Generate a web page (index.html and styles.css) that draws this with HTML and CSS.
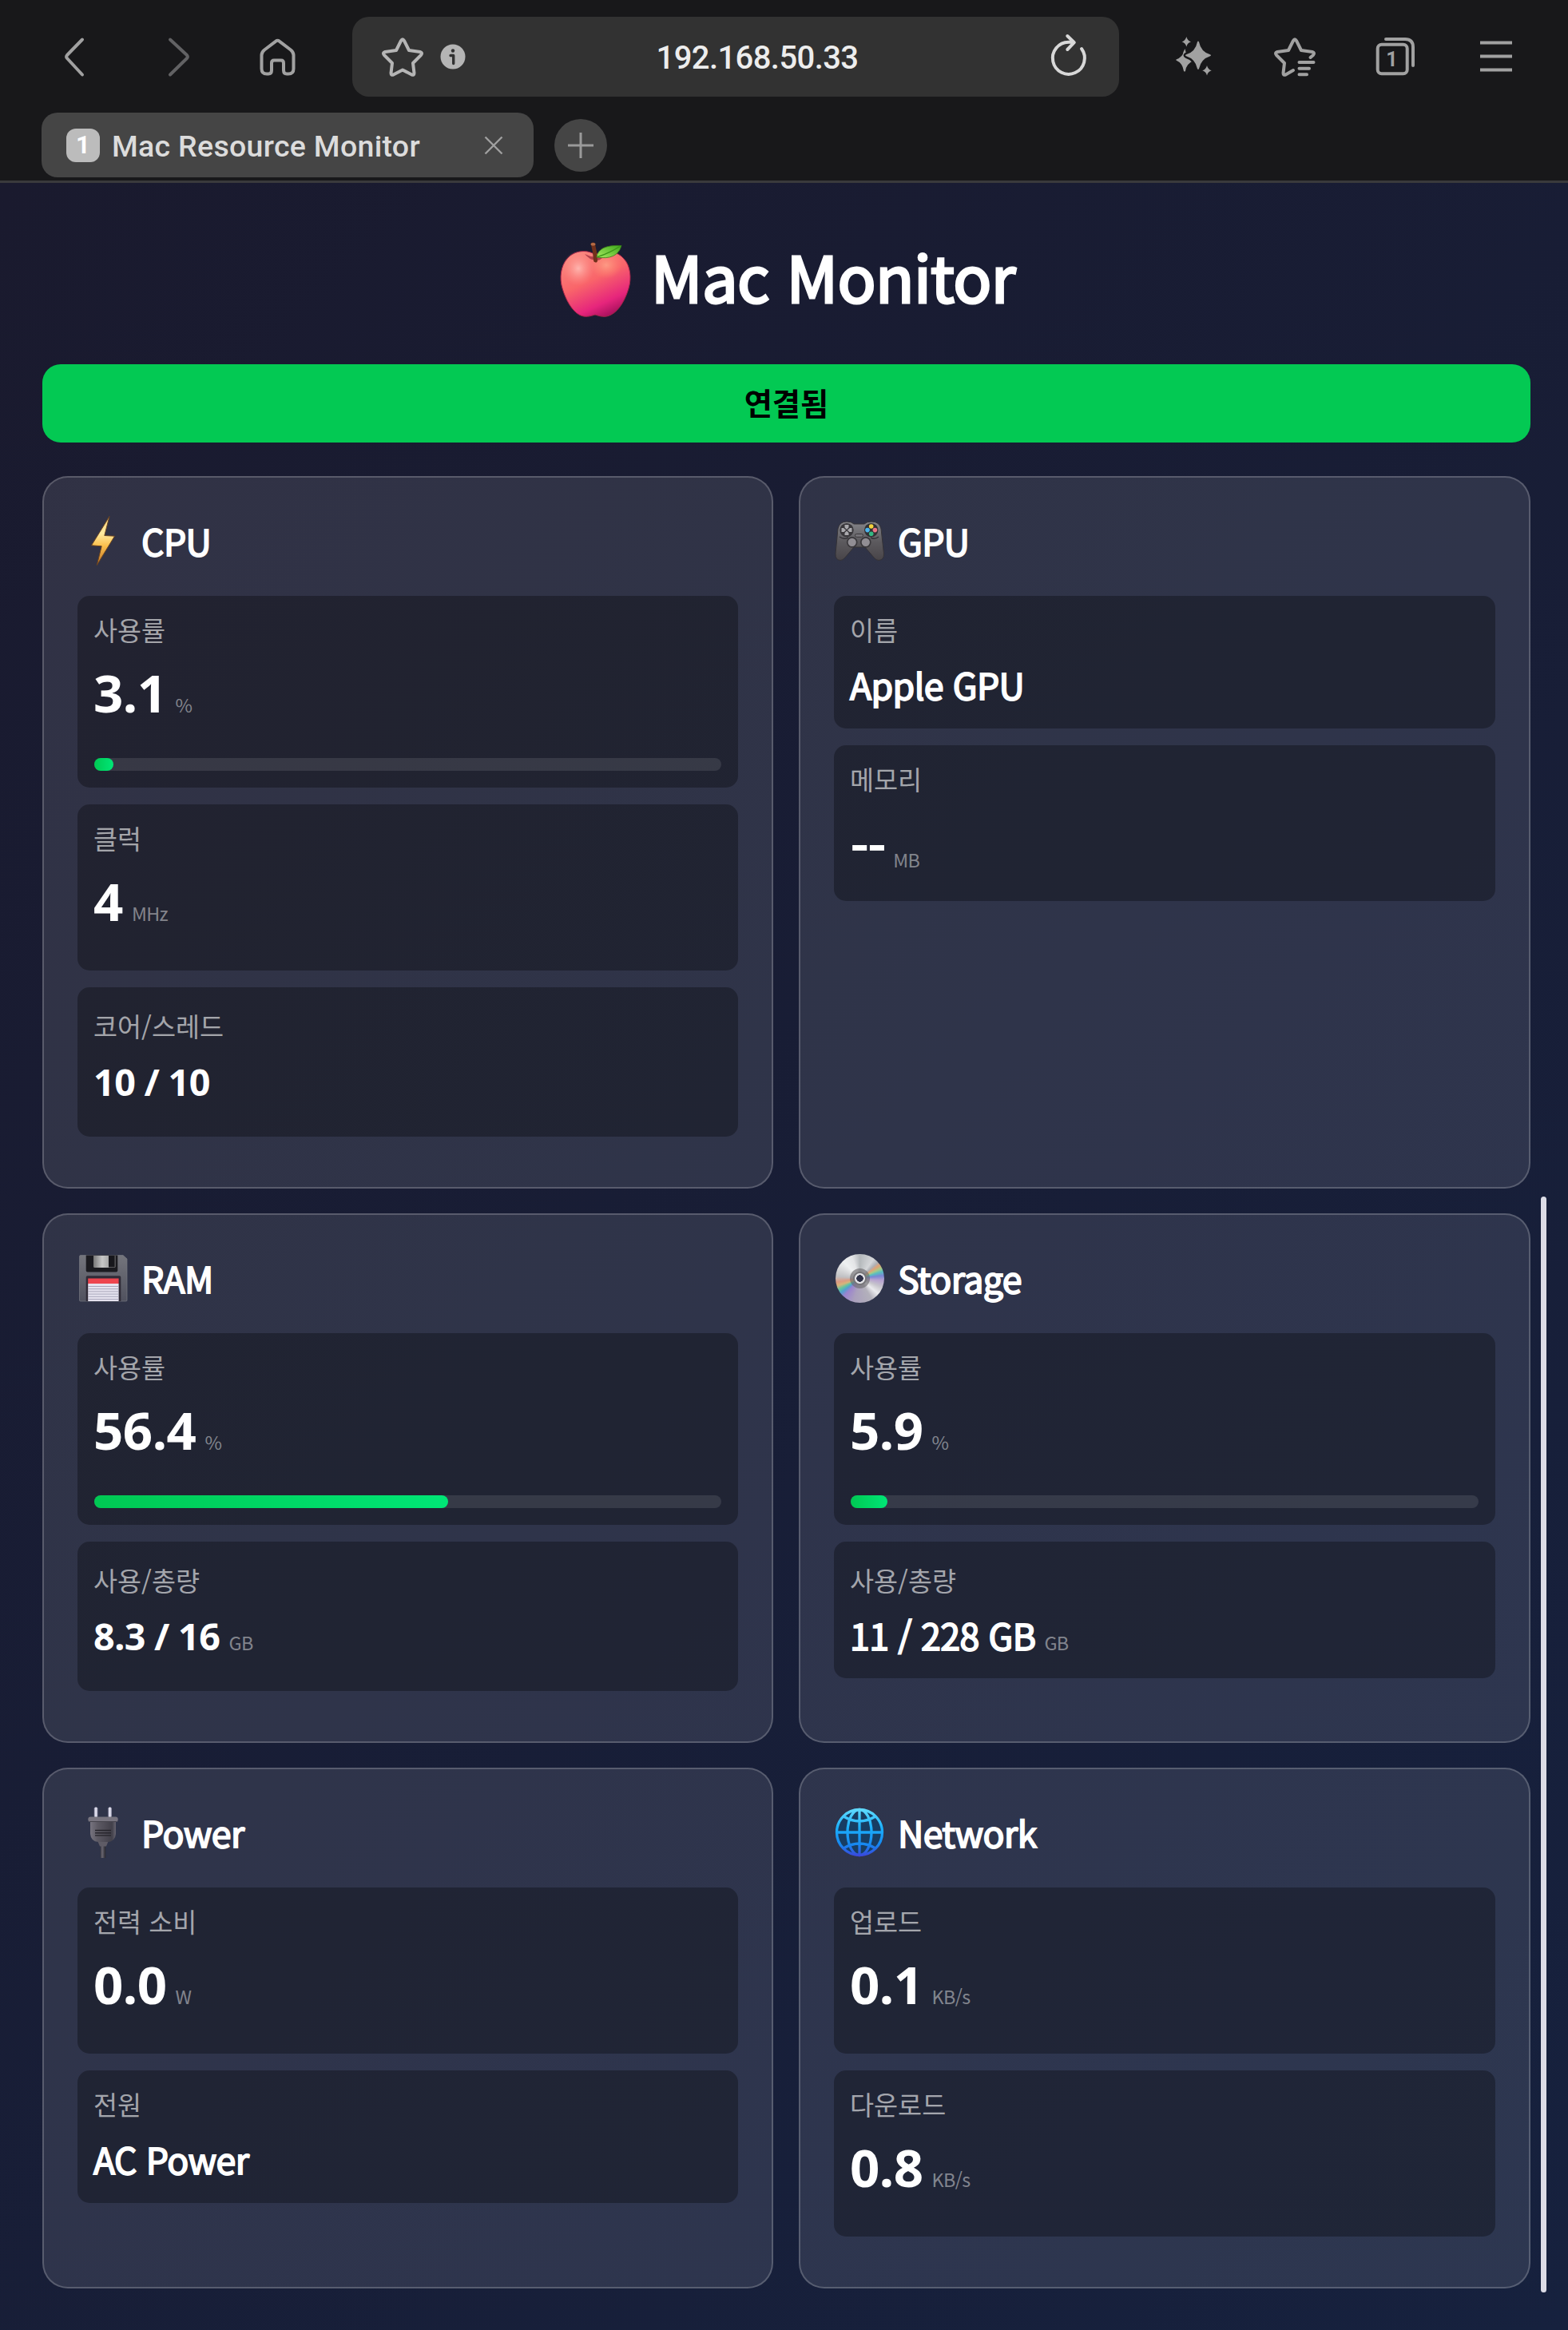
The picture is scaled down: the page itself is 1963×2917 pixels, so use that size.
FILE: index.html
```html
<!DOCTYPE html>
<html lang="ko">
<head>
<meta charset="utf-8">
<title>Mac Resource Monitor</title>
<link rel="stylesheet" href="styles.css">
</head>
<body>
<header class="browser">
  <div class="toolbar">
    <nav class="nav-buttons">
      <svg class="icon" viewBox="0 0 60 60"><path d="M40 8.500 21 28Q19.300 30 21 32L40 52.500"/></svg>
      <svg class="icon icon-disabled" viewBox="0 0 60 60"><path d="M19 8.500 40 28Q41.700 30 40 32L19 52.500"/></svg>
      <svg class="icon icon-home" viewBox="0 0 60 60"><path d="M27 10.800Q29.500 8.800 32 10.800L46 21.500Q49.500 24.500 49.500 28V45Q49.500 51.500 43 51.500H41Q37 51.500 37 47V38Q37 34.500 34 34.500H25Q22 34.500 22 38V47Q22 51.500 18 51.500H16Q9.500 51.500 9.500 45V28Q9.500 24.500 13 21.500Z"/></svg>
    </nav>
    <div class="address">
      <svg class="icon icon-star" viewBox="0 0 60 60"><path d="M28 10Q30 6.500 32 10L38 22 52 24Q55.500 25 53 28L43 38 44.500 50.500Q44.500 53.500 41.500 52.500L30 46.500 18.500 52.500Q15.500 53.500 15.500 50.500L17 38 7 28Q4.500 25 8 24L22 22Z"/></svg>
      <svg class="info" viewBox="0 0 32 32"><circle cx="16" cy="16" r="15.500" fill="#b5b5b5"/><circle cx="16" cy="8.500" r="2.200" fill="#323232"/><path d="M13 14.500H16.700V24.500" fill="none" stroke="#323232" stroke-width="3.400" stroke-linecap="round" stroke-linejoin="round"/></svg>
      <span class="url">192.168.50.33</span>
      <svg class="icon icon-reload" viewBox="0 0 60 60"><path d="M46 20A20 20 0 1 1 29.700 11.800H36M28.300 4 36.800 12.200 28.300 21"/></svg>
    </div>
    <div class="actions">
      <svg class="icon icon-solid" viewBox="0 0 60 60"><path d="M18.500 20Q20 31 28.500 35.300 20 39 19 48 18 49 17 48 15.500 38 7.500 34.500 7 34 7.500 33.500 16 30 16.500 24Z"/><path d="M34 11.500Q35 9.500 36 11.500 38.500 24 50 27.300 52 28.300 50 29.300 38.500 33 36 45 35 47 34 45 31.500 33 20 29.300 18 28.300 20 27.300 31.500 24 34 11.500Z" stroke="#18181a" stroke-width="5"/><path d="M34 11.500Q35 9.500 36 11.500 38.500 24 50 27.300 52 28.300 50 29.300 38.500 33 36 45 35 47 34 45 31.500 33 20 29.300 18 28.300 20 27.300 31.500 24 34 11.500Z"/><path d="M20.300 5Q21.500 10 26 11.300 21.500 12.700 20.300 17.500 19.100 12.700 14.600 11.300 19.100 10 20.300 5ZM46 41Q47.200 46 51.700 47.300 47.200 48.700 46 53.500 44.800 48.700 40.300 47.300 44.800 46 46 41Z"/></svg>
      <svg class="icon" viewBox="0 0 60 60"><path d="M49.500 31 53 28Q55.500 25 52 24L38 22 32 10Q30 6.500 28 10L22 22 8 24Q4.500 25 7 28L17 38 15.500 50.500Q15.500 53.500 18.500 52.500L28 47M35.500 37H53.500M35.500 44.700H48M35.500 52.300H45"/></svg>
      <svg class="icon" viewBox="0 0 60 60"><rect x="7.700" y="14.700" width="37" height="36.500" rx="5"/><path d="M18 8H42Q52 8 52 18V41"/><text class="tab-count" x="25.500" y="41.500">1</text></svg>
      <svg class="icon icon-menu" viewBox="0 0 60 60"><path d="M10 12.500H50M10 29.500H50M10 46.500H50"/></svg>
    </div>
  </div>
  <div class="tabstrip">
    <div class="tab">
      <span class="tab-badge">1</span>
      <span class="tab-title">Mac Resource Monitor</span>
      <svg class="tab-close" viewBox="0 0 24 24"><path d="M1.500 1.500 22.500 22.500M22.500 1.500 1.500 22.500"/></svg>
    </div>
    <span class="new-tab"><svg viewBox="0 0 34 34"><path d="M17 1V33M1 17H33"/></svg></span>
  </div>
</header>

<main class="page">
  <h1 class="page-title">
    <svg class="apple" viewBox="0 0 96 96">
      <defs>
        <linearGradient id="apple-body" x1=".2" y1="0" x2=".7" y2="1"><stop offset="0" stop-color="#f98a80"/><stop offset=".45" stop-color="#f9656a"/><stop offset=".8" stop-color="#e6257c"/><stop offset="1" stop-color="#a50f5c"/></linearGradient>
        <radialGradient id="apple-shine"><stop offset="0" stop-color="#ffb9b2" stop-opacity=".95"/><stop offset="1" stop-color="#ff8c84" stop-opacity="0"/></radialGradient>
        <radialGradient id="apple-shine-right"><stop offset="0" stop-color="#ffa58a" stop-opacity=".8"/><stop offset="1" stop-color="#ff8c70" stop-opacity="0"/></radialGradient>
        <linearGradient id="leaf" x1="0" y1="1" x2="1" y2="0"><stop offset="0" stop-color="#a8e860"/><stop offset="1" stop-color="#3da91c"/></linearGradient>
      </defs>
      <path d="M47 17C38 10 21 11 12 22 4 31 2 46 6 59 10 73 18 87 27 92 34 96 41 94 47 92 53 94 60 96 67 92 77 87 85 73 89 59 93 46 91 30 83 22 74 11 57 10 47 17Z" fill="url(#apple-body)" stroke="#a52448" stroke-width="1"/>
      <ellipse cx="26" cy="34" rx="20" ry="22" fill="url(#apple-shine)"/>
      <ellipse cx="61" cy="30" rx="20" ry="17" fill="url(#apple-shine-right)"/>
      <path d="M34 16Q47 23 60 16Q52 27 48 23Q42 25 34 16Z" fill="#8e2034" opacity=".65"/>
      <path d="M44.500 4Q47 13 47.500 24" fill="none" stroke="#71301b" stroke-width="5" stroke-linecap="round"/>
      <ellipse cx="44.500" cy="3.700" rx="3" ry="1.800" fill="#b66b45"/>
      <path d="M49 20Q51 4 80 5.500Q75 24 49 20Z" fill="url(#leaf)" stroke="#377d16" stroke-width=".8"/>
      <path d="M50 19.500Q63 16 78 6.500" fill="none" stroke="#3c9418" stroke-width="1.300"/>
    </svg>
    <span class="page-name">Mac Monitor</span>
  </h1>

  <div class="status">연결됨</div>

  <div class="grid">
    <section class="card">
      <h2 class="card-title">
        <svg class="emoji" viewBox="0 0 64 64"><defs><linearGradient id="bolt" x1="0" y1="0" x2="0" y2="1"><stop offset="0" stop-color="#f5cf78"/><stop offset=".35" stop-color="#ffeaa0"/><stop offset=".6" stop-color="#fbc04d"/><stop offset="1" stop-color="#bd6f25"/></linearGradient></defs><path d="M40 1.500 33.800 25.500 46.500 26.200 24.300 62.500 30.200 38.800 17.500 37.800Z" fill="url(#bolt)" stroke="#6b4420" stroke-width="1" stroke-linejoin="round"/></svg>
        CPU
      </h2>
      <div class="metric metric-usage"><div class="label">사용률</div><div class="value">3.1<span class="unit">%</span></div><div class="bar"><div class="fill" style="width:3.1%"></div></div></div>
      <div class="metric metric-number"><div class="label">클럭</div><div class="value">4<span class="unit">MHz</span></div></div>
      <div class="metric metric-ratio"><div class="label label-slash">코어/스레드</div><div class="value value-small">10 / 10</div></div>
    </section>

    <section class="card">
      <h2 class="card-title">
        <svg class="emoji" viewBox="0 0 64 64"><defs><linearGradient id="pad" x1="0" y1="0" x2="0" y2="1"><stop offset="0" stop-color="#85858a"/><stop offset=".5" stop-color="#5d5b5f"/><stop offset="1" stop-color="#484448"/></linearGradient></defs>
          <path d="M5 17Q7 8 16 8Q22 8 25 11H38Q41 8 47 8Q57 8 59 17L62.500 48Q63 56 56 56.500Q53 56.500 50 53L39 40H25L14 53Q11 56.500 8 56.500Q1.500 56 2 48Z" fill="url(#pad)" stroke="#343236" stroke-width="1"/>
          <path d="M7 27Q12 31 18 28M56 27Q51 31 46 28" fill="none" stroke="#353338" stroke-width="1.500"/>
          <circle cx="16" cy="18.600" r="8.700" fill="#39373b"/><circle cx="46.700" cy="18.600" r="8.700" fill="#313034"/>
          <path d="M13.500 12H18.500V16H22.500V21H18.500V25H13.500V21H9.500V16H13.500Z" fill="#aaa9ad"/><path d="M12 15 20 22.500M20 15 12 22.500" stroke="#39373b" stroke-width="1.300"/>
          <circle cx="46.700" cy="14" r="2.800" fill="#f5d33c"/><circle cx="42" cy="18.600" r="2.800" fill="#4cb5ee"/><circle cx="51.400" cy="18.600" r="2.800" fill="#ee7786"/><circle cx="46.700" cy="23.200" r="2.800" fill="#35b783"/>
          <rect x="26.500" y="23.500" width="10" height="3.800" rx="1.900" fill="#77757a" stroke="#3b393c"/>
          <circle cx="22.700" cy="33.800" r="6" fill="#918e94" stroke="#39373b" stroke-width="1.700"/><circle cx="39.800" cy="33.800" r="6" fill="#918e94" stroke="#39373b" stroke-width="1.700"/></svg>
        GPU
      </h2>
      <div class="metric metric-text"><div class="label">이름</div><div class="value value-text">Apple GPU</div></div>
      <div class="metric metric-empty"><div class="label">메모리</div><div class="value value-dash">--<span class="unit">MB</span></div></div>
    </section>

    <section class="card">
      <h2 class="card-title">
        <svg class="emoji" viewBox="0 0 64 64"><defs><linearGradient id="floppy" x1="0" y1="0" x2="0" y2="1"><stop offset="0" stop-color="#74757c"/><stop offset="1" stop-color="#50515e"/></linearGradient><linearGradient id="shutter"><stop offset="0" stop-color="#777"/><stop offset=".4" stop-color="#c8c8c8"/><stop offset="1" stop-color="#858585"/></linearGradient></defs>
          <path d="M2.500 5Q2.500 3.500 4 3.500H57L62 8V60Q62 61 60.500 61H4Q2.500 61 2.500 60Z" fill="url(#floppy)" stroke="#777983" stroke-width=".7"/>
          <path d="M10.700 3.500H50.300V22.500Q50.300 24.500 48.300 24.500H12.700Q10.700 24.500 10.700 22.500Z" fill="#1b1b20"/>
          <path d="M20 4H47.500V17.500Q47.500 19 46 19H21.500Q20 19 20 17.500Z" fill="url(#shutter)"/><path d="M39 4H46.700V18.500H39Z" fill="#17171c"/>
          <path d="M10.700 61V31Q10.700 29.300 12.500 29.300H52.500Q54.300 29.300 54.300 31V61Z" fill="#302c38"/>
          <path d="M13.200 39H51.600V61H13.200Z" fill="#e6e3ef"/><path d="M13.200 32.500H51.600V39H13.200Z" fill="#ee454f"/><path d="M13.200 42.500H51.600M13.200 45.700H51.600M13.200 48.900H51.600M13.200 52.100H51.600M13.200 55.300H51.600M13.200 58.500H51.600" stroke="#a29fb4" stroke-width=".9"/></svg>
        RAM
      </h2>
      <div class="metric metric-usage"><div class="label">사용률</div><div class="value">56.4<span class="unit">%</span></div><div class="bar"><div class="fill" style="width:56.4%"></div></div></div>
      <div class="metric metric-ratio"><div class="label label-slash">사용/총량</div><div class="value value-small">8.3 / 16<span class="unit">GB</span></div></div>
    </section>

    <section class="card">
      <h2 class="card-title">
        <span class="emoji disc"></span>
        Storage
      </h2>
      <div class="metric metric-usage"><div class="label">사용률</div><div class="value">5.9<span class="unit">%</span></div><div class="bar"><div class="fill" style="width:5.9%"></div></div></div>
      <div class="metric metric-capacity"><div class="label label-slash">사용/총량</div><div class="value value-text">11 / 228 GB<span class="unit">GB</span></div></div>
    </section>

    <section class="card">
      <h2 class="card-title">
        <svg class="emoji" viewBox="0 0 64 64"><defs><linearGradient id="plug"><stop offset="0" stop-color="#77747f"/><stop offset=".3" stop-color="#5c5963"/><stop offset=".85" stop-color="#42404a"/><stop offset="1" stop-color="#66636e"/></linearGradient><linearGradient id="prong"><stop offset="0" stop-color="#8e8da5"/><stop offset=".5" stop-color="#f3f3ff"/><stop offset="1" stop-color="#8e8da5"/></linearGradient><linearGradient id="cord"><stop offset="0" stop-color="#36343c"/><stop offset=".35" stop-color="#6a6772"/><stop offset="1" stop-color="#26252c"/></linearGradient></defs>
          <rect x="20.800" y=".5" width="4.600" height="13" rx="1.800" fill="url(#prong)"/><rect x="38.300" y=".5" width="4.600" height="13" rx="1.800" fill="url(#prong)"/>
          <path d="M28.700 48H35.200V64H28.700Z" fill="url(#cord)"/>
          <path d="M16 18H48V34Q47 43.500 38 44H26Q17 43.500 16 34Z" fill="url(#plug)"/>
          <rect x="13.300" y="12.600" width="37.400" height="6.400" rx="3" fill="#77747f"/><path d="M15 18.500H49" stroke="#45434c" stroke-width="1.200"/>
          <path d="M25.700 44H38.300L36 49.500H28Z" fill="#5f5c66"/><path d="M22 29.500H42M22 32.700H42M22 35.900H42" stroke="#26242b" stroke-width="1.400"/></svg>
        Power
      </h2>
      <div class="metric metric-number"><div class="label">전력 소비</div><div class="value">0.0<span class="unit">W</span></div></div>
      <div class="metric metric-text"><div class="label">전원</div><div class="value value-text">AC Power</div></div>
    </section>

    <section class="card">
      <h2 class="card-title">
        <svg class="emoji" viewBox="0 0 64 64"><defs><linearGradient id="globe" gradientUnits="userSpaceOnUse" x1="0" y1="2" x2="0" y2="62"><stop offset="0" stop-color="#62dcff"/><stop offset=".4" stop-color="#1cb0fb"/><stop offset=".75" stop-color="#1688f0"/><stop offset="1" stop-color="#3b45dc"/></linearGradient></defs>
          <circle cx="32" cy="32" r="28.700" fill="#173d63"/>
          <g fill="none" stroke="url(#globe)" stroke-width="3.300"><circle cx="32" cy="32" r="28.500"/><ellipse cx="32" cy="32" rx="15" ry="28.500"/><path d="M31.990 3 32.010 61M3 31.990 61 32.010M12 12Q32 24 52 12M12 52Q32 40 52 52"/></g></svg>
        Network
      </h2>
      <div class="metric metric-number"><div class="label">업로드</div><div class="value">0.1<span class="unit">KB/s</span></div></div>
      <div class="metric metric-number"><div class="label">다운로드</div><div class="value">0.8<span class="unit">KB/s</span></div></div>
    </section>
  </div>
  <div class="scrollbar"></div>
</main>
</body>
</html>
```
FILE: styles.css
```css
* { box-sizing: border-box; }

body {
  margin: 0;
  width: 1963px;
  height: 2917px;
  display: flex;
  flex-direction: column;
  background: #16213e;
  color: #fff;
  font-family: "Noto Sans CJK KR", "Noto Sans", sans-serif;
}

svg { display: block; flex: none; }

/* Browser chrome */
.browser {
  height: 229px;
  flex: none;
  background: #18181a;
  border-bottom: 3px solid #3a3a3c;
  font-family: Roboto, sans-serif;
}
.toolbar { display: flex; align-items: center; padding: 21px 60px 0 63px; }
.nav-buttons { display: flex; gap: 71px; width: 378px; }
.nav-buttons .icon-home { margin-left: -7px; }
.icon {
  width: 60px;
  height: 60px;
  fill: none;
  stroke: #a1a1a1;
  stroke-width: 4;
  stroke-linecap: round;
  stroke-linejoin: round;
}
.icon-disabled { stroke: #626264; }
.icon-solid { fill: #a1a1a1; stroke: none; }
.icon-menu { stroke-linecap: butt; }
.tab-count { fill: #a1a1a1; stroke: none; font-size: 25px; font-weight: 700; text-anchor: middle; }
.address {
  width: 960px;
  height: 100px;
  display: flex;
  align-items: center;
  padding: 0 33px 0 33px;
  border-radius: 21px;
  background: #323232;
}
.icon-star { stroke: #b5b5b5; }
.info { width: 32px; height: 32px; margin-left: 17px; }
.url { flex: 1; padding: 2px 0 0 5px; text-align: center; font-size: 40px; font-weight: 500; color: #ededed; letter-spacing: -.6px; }
.icon-reload { stroke: #d8d8d8; }
.actions { display: flex; gap: 66px; margin-left: 64px; }

.tabstrip { display: flex; align-items: center; gap: 26px; padding: 20px 0 0 52px; }
.tab {
  width: 616px;
  height: 81px;
  display: flex;
  align-items: center;
  padding: 0 38px 0 31px;
  border-radius: 20px;
  background: #454545;
}
.tab-badge {
  width: 42px;
  height: 42px;
  border-radius: 12px;
  background: #bcbcbc;
  font-size: 31px;
  line-height: 42px;
  font-weight: 700;
  text-align: center;
}
.tab-title { flex: 1; padding: 2px 0 0 15px; font-size: 37.5px; font-weight: 500; color: #dcdcdc; letter-spacing: .3px; white-space: nowrap; }
.tab-close { width: 24px; height: 24px; stroke: #a0a0a0; stroke-width: 2.4; }
.new-tab { width: 66px; height: 66px; display: grid; place-items: center; border-radius: 50%; background: #454545; }
.new-tab svg { width: 34px; height: 34px; stroke: #9a9a9a; stroke-width: 3; }

/* Monitor page */
.page {
  position: relative;
  flex: 1;
  padding: 0 47px 0 53px;
  background: linear-gradient(135deg, #1a1a2e 0%, #16213e 100%);
}
.page-title {
  height: 227px;
  margin: 0;
  display: flex;
  align-items: center;
  justify-content: center;
  gap: 21px;
  font-size: 79.5px;
  font-weight: 400;
  line-height: 119px;
  letter-spacing: -.008em;
  -webkit-text-stroke: 3px #fff;
}
.page-name { padding-top: 3px; }
.apple { width: 96px; height: 96px; margin-top: 15px; }
.status {
  height: 98px;
  margin-bottom: 42px;
  border-radius: 23px;
  background: #03c953;
  color: #000;
  font-size: 38.3px;
  font-weight: 700;
  line-height: 96px;
  text-align: center;
}
.grid {
  display: grid;
  grid-template-columns: 915px 916px;
  grid-template-rows: 892px 663px 652px;
  gap: 31px 32px;
}
.card {
  padding: 42px;
  border: 2px solid rgba(255, 255, 255, .2);
  border-radius: 32px;
  background: rgba(255, 255, 255, .1);
}
.card-title {
  height: 74px;
  margin: 0 0 32px;
  display: flex;
  align-items: center;
  gap: 16px;
  font-size: 44.7px;
  font-weight: 400;
  line-height: 74px;
  letter-spacing: -.014em;
  -webkit-text-stroke: 1.8px #fff;
}
.emoji { width: 64px; height: 64px; flex: none; }
.disc {
  width: 61px;
  height: 61px;
  margin: 0 1px 0 2px;
  border-radius: 50%;
  background:
    radial-gradient(circle, #30334a 0 4px, #e4e4e8 4.5px 6px, #77767a 7px 8px, rgba(110, 108, 112, .65) 9px 12px, transparent 13px),
    conic-gradient(#b5b9bc, #d5d7da 35deg, #aeb0b5 48deg, #e1a276 56deg, #a7ca88 65deg, #58bfc0 73deg, #7987d5 83deg, #b6a2d0 95deg, #c7c5cc 112deg, #ebebee 130deg, #b3b1bb 150deg, #aaa0bd 195deg, #9b83cf 222deg, #549fd0 233deg, #62c4a0 242deg, #d9b47a 252deg, #dc9a81 261deg, #c0c0c3 275deg, #eef0f1 315deg, #e4e5e7 340deg, #b5b9bc);
}

.metric { padding: 19px 21px 0; margin-bottom: 21px; border-radius: 15px; background: rgba(0, 0, 0, .3); }
.metric-usage { height: 240px; }
.metric-number { height: 208px; }
.metric-ratio { height: 187px; }
.metric-text { height: 166px; }
.metric-empty { height: 195px; }
.metric-capacity { height: 171px; }

.label { height: 45px; margin-left: -1px; line-height: 45px; font-size: 32.67px; color: rgba(255, 255, 255, .6); }
.label-slash { padding-top: 6px; height: 51px; }
.value { height: 114px; margin-left: -1px; line-height: 114px; font-family: "Noto Sans", sans-serif; font-size: 65.33px; font-weight: 700; letter-spacing: -.5px; white-space: nowrap; }
.value-small { height: 96px; line-height: 96px; font-size: 46.67px; word-spacing: -.5px; }
.value-text { height: 94px; line-height: 94px; font-size: 44.7px; font-family: "Noto Sans CJK KR", sans-serif; font-weight: 400; letter-spacing: -.014em; -webkit-text-stroke: 1.8px #fff; }
.value-dash { height: 122px; line-height: 122px; font-family: "Noto Sans CJK KR", sans-serif; letter-spacing: -2.6px; }
.unit { margin-left: 11px; font-family: "Noto Sans CJK KR", sans-serif; font-size: 23.33px; font-weight: 400; line-height: 1; letter-spacing: -.6px; color: rgba(255, 255, 255, .45); -webkit-text-stroke: 0; }
.bar { height: 16px; margin-top: 25px; border-radius: 8px; background: rgba(255, 255, 255, .1); }
.fill { height: 100%; border-radius: 8px; background: linear-gradient(90deg, #00c853, #00e676); }

.scrollbar { position: absolute; top: 1269px; left: 1929px; width: 7px; height: 1372px; border-radius: 4px; background: #dcdce6; }
```
